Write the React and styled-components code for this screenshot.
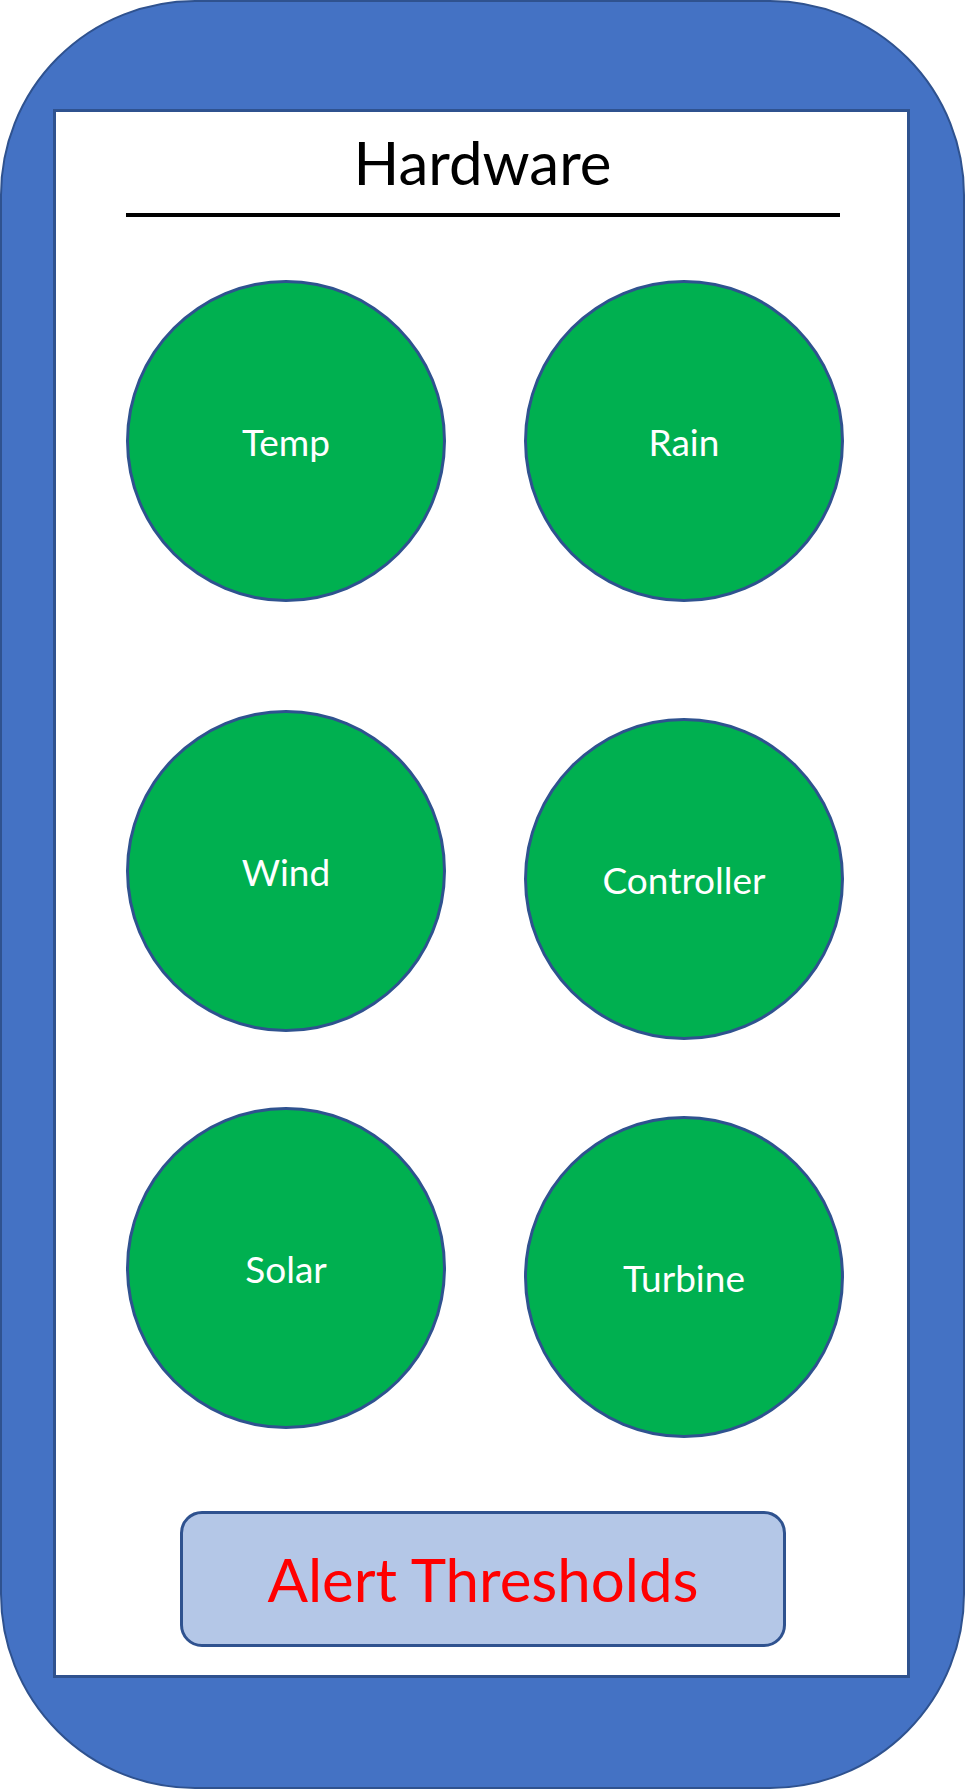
import React from "react";
import styled, { createGlobalStyle } from "styled-components";

const Global = createGlobalStyle`
  html, body { margin: 0; padding: 0; background: #ffffff; }
  body { font-family: Lato, "Open Sans", sans-serif; }
  * { box-sizing: border-box; }
`;

const Frame = styled.div`
  width: 965px;
  height: 1789px;
  background: #4472c4;
  border: 2px solid #2f528f;
  border-radius: 195px;
  padding: 107px 53px 109px 51px;
  display: flex;
`;

const Panel = styled.div`
  flex: 1;
  background: #ffffff;
  border: 3px solid #2f528f;
  display: flex;
  flex-direction: column;
  padding-top: 15px;
`;

const Title = styled.h1`
  margin: 0;
  font-family: Lato, "Open Sans", sans-serif;
  font-weight: 400;
  font-size: 60px;
  line-height: 70px;
  color: #000000;
  text-align: center;
  padding-left: 2px;
`;

const Rule = styled.div`
  width: 714px;
  height: 4px;
  background: #000000;
  margin: 16px 0 0 70px;
`;

const Grid = styled.div`
  display: grid;
  grid-template-columns: 320px 320px;
  column-gap: 78px;
  margin: 63px 0 0 70px;
  align-items: start;
`;

const Column = styled.div`
  display: flex;
  flex-direction: column;
`;

const Sensor = styled.div`
  width: 320px;
  height: 322px;
  margin-top: ${(p) => p.$gap || 0}px;
  border-radius: 50%;
  background: #00b050;
  border: 3px solid #2f528f;
  display: flex;
  align-items: center;
  justify-content: center;
  color: #ffffff;
  font-family: Lato, "Open Sans", sans-serif;
  font-size: 37px;
  line-height: 1;
`;

const AlertButton = styled.div`
  width: 606px;
  height: 136px;
  margin: 73px 0 0 124px;
  background: #b4c7e7;
  border: 3px solid #2f528f;
  border-radius: 22px;
  display: flex;
  align-items: center;
  justify-content: center;
  color: #ff0000;
  font-family: Lato, "Open Sans", sans-serif;
  font-size: 60px;
  line-height: 1;
`;

const left = [
  { name: "Temp", gap: 0 },
  { name: "Wind", gap: 108 },
  { name: "Solar", gap: 75 },
];
const right = [
  { name: "Rain", gap: 0 },
  { name: "Controller", gap: 116 },
  { name: "Turbine", gap: 76 },
];

export default function App() {
  return (
    <>
      <Global />
      <Frame>
        <Panel>
          <Title>Hardware</Title>
          <Rule />
          <Grid>
            <Column>
              {left.map((s) => (
                <Sensor key={s.name} $gap={s.gap}>{s.name}</Sensor>
              ))}
            </Column>
            <Column>
              {right.map((s) => (
                <Sensor key={s.name} $gap={s.gap}>{s.name}</Sensor>
              ))}
            </Column>
          </Grid>
          <AlertButton>Alert Thresholds</AlertButton>
        </Panel>
      </Frame>
    </>
  );
}
